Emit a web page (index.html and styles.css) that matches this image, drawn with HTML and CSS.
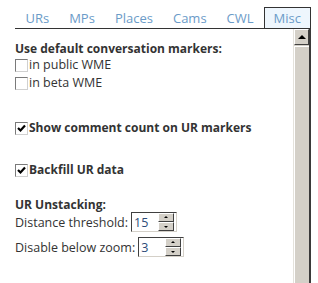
FILE: index.html
```html
<!DOCTYPE html>
<html lang="en">
<head>
    <meta charset="UTF-8">
    <title>Misc settings</title>
    <link rel="stylesheet" href="styles.css">
</head>
<body>
    <div class="frame">
        <div class="tabs">
            <span class="tab">URs</span>
            <span class="tab">MPs</span>
            <span class="tab">Places</span>
            <span class="tab">Cams</span>
            <span class="tab">CWL</span>
            <span class="tab active">Misc</span>
        </div>

        <div class="body">
            <div class="content">
                <div class="heading first">Use default conversation markers:</div>
                <div class="row"><span class="cb"></span>in public WME</div>
                <div class="row"><span class="cb"></span>in beta WME</div>

                <div class="row bold gap-big"><span class="cb checked"><svg width="9" height="9" viewBox="0 0 9 9"><path d="M1 4 L3.5 6.5 L8 1.5" fill="none" stroke="#000" stroke-width="2.2"/></svg></span>Show comment count on UR markers</div>

                <div class="row bold gap-mid"><span class="cb checked"><svg width="9" height="9" viewBox="0 0 9 9"><path d="M1 4 L3.5 6.5 L8 1.5" fill="none" stroke="#000" stroke-width="2.2"/></svg></span>Backfill UR data</div>

                <div class="heading gap-small">UR Unstacking:</div>
                <div class="field top">Distance threshold:
                    <span class="spin-box">
                        <input class="num" type="text" value="15">
                        <span class="spin"><span class="btn up"></span><span class="btn down"></span></span>
                    </span>
                </div>
                <div class="field">Disable below zoom:
                    <span class="spin-box">
                        <input class="num" type="text" value="3">
                        <span class="spin"><span class="btn up"></span><span class="btn down"></span></span>
                    </span>
                </div>
            </div>

            <div class="scrollbar">
                <div class="sb-button"><span class="arrow"></span></div>
                <div class="sb-thumb"></div>
            </div>
        </div>
    </div>
</body>
</html>
```

FILE: styles.css
```css
body {
    margin: 0;
    background: #fff;
    font-family: "Open Sans", sans-serif;
    font-size: 13px;
    color: #333;
}
.frame {
    width: 296px;
    margin-left: 15px;
    padding-top: 8px;
}
.tabs {
    display: flex;
    justify-content: flex-end;
    border-bottom: 1px solid #333;
    height: 20px;
}
.tab {
    padding: 0 10px;
    line-height: 20px;
    color: #6b9bc8;
}
.tab.active {
    background: #eef6fd;
    border: 1px solid #333;
    border-bottom: none;
    margin-top: -1px;
    height: 21px;
    padding: 0 9px;
    box-sizing: border-box;
    line-height: 20px;
}
.body {
    display: flex;
    height: 254px;
    border-right: 2px solid #3a3a3a;
}
.content {
    flex: 1;
    padding-top: 11px;
    font-size: 12.5px;
}
.heading {
    font-weight: bold;
    font-size: 12px;
    line-height: 18px;
}
.heading.first {
    margin-bottom: -2px;
}
.row {
    display: flex;
    align-items: center;
    line-height: 18px;
}
.bold {
    font-weight: bold;
    font-size: 12px;
}
.gap-big {
    margin-top: 27px;
}
.gap-mid {
    margin-top: 24px;
}
.gap-small {
    margin-top: 17px;
}
.cb {
    width: 11px;
    height: 11px;
    border: 1px solid;
    border-color: #7a7a7a #d0d0d0 #d0d0d0 #7a7a7a;
    background: #fff;
    margin-right: 1px;
    display: flex;
    align-items: center;
    justify-content: center;
}
.field {
    display: flex;
    align-items: center;
    gap: 3px;
    height: 20px;
    margin-bottom: 5px;
}
.field.top {
    margin-top: -2px;
}
.spin-box {
    display: flex;
    align-items: center;
    width: 44px;
    height: 18px;
    border: 1px solid;
    border-color: #404040 #d4d0c8 #d4d0c8 #404040;
    background: #fff;
}
.num {
    width: 24px;
    border: none;
    padding: 0 0 0 2px;
    font: inherit;
    color: #2d4a78;
    outline: none;
}
.spin {
    display: flex;
    flex-direction: column;
    margin-left: auto;
    margin-right: 2px;
}
.btn {
    width: 14px;
    height: 7px;
    background: #d4d0c8;
    border: 1px solid;
    border-color: #fff #404040 #404040 #fff;
    position: relative;
}
.btn::after {
    content: "";
    position: absolute;
    left: 5px;
    border-left: 2px solid transparent;
    border-right: 2px solid transparent;
}
.btn.up::after {
    top: 2px;
    border-bottom: 2px solid #000;
}
.btn.down::after {
    top: 3px;
    border-top: 2px solid #000;
}
.scrollbar {
    width: 15px;
    background: #d4d0c8;
    display: flex;
    flex-direction: column;
    border-left: 1px solid #e4e2dc;
}
.sb-button {
    height: 14px;
    border: 1px solid;
    border-color: #fff #404040 #404040 #fff;
    display: flex;
    align-items: center;
    justify-content: center;
}
.arrow {
    border-left: 4px solid transparent;
    border-right: 4px solid transparent;
    border-bottom: 4px solid #000;
}
.sb-thumb {
    flex: 1;
    margin-top: 1px;
    border-left: 1px solid #fff;
    border-top: 1px solid #fff;
}
```
